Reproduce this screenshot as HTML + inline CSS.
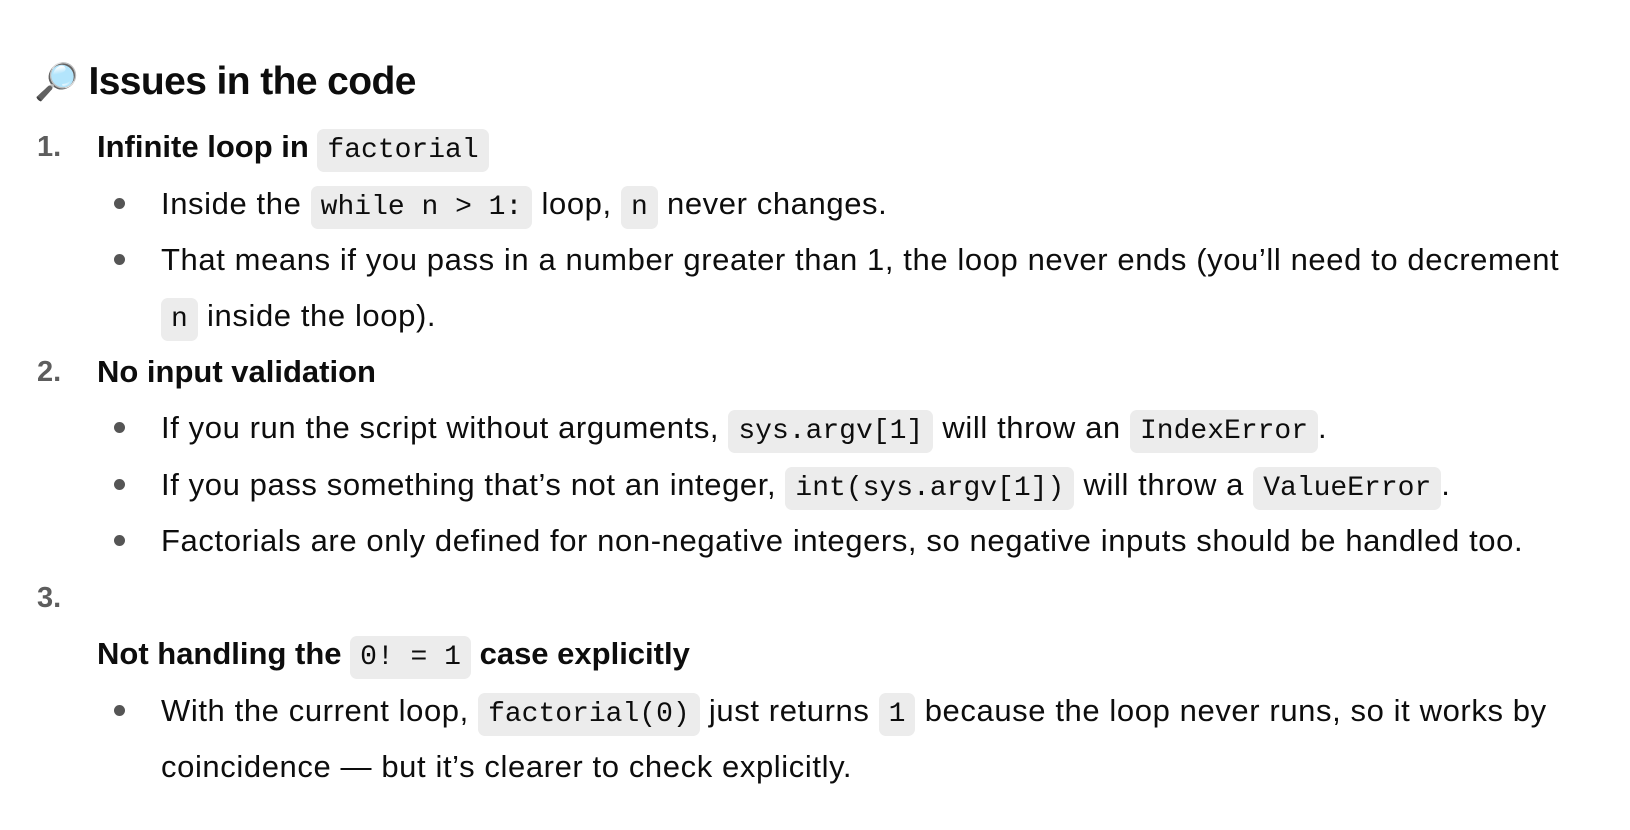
<!DOCTYPE html>
<html><head><meta charset="utf-8"><style>
body{margin:0;background:#fff;width:1630px;height:830px;overflow:hidden;font-family:"Liberation Sans",sans-serif;color:#0d0d0d}
.l{position:absolute;white-space:nowrap;font-size:31px;letter-spacing:0.6px;line-height:44px;height:44px}
.h{position:absolute;left:34px;top:56px;font-size:39px;font-weight:bold;line-height:52px;letter-spacing:-0.6px}
.n{position:absolute;left:37px;font-weight:bold;color:#5d5d5d;font-size:29px;line-height:44px}
.b{font-weight:bold;letter-spacing:0}
.dot{position:absolute;left:114px;width:11px;height:11px;border-radius:50%;background:#555}
code{font-family:"Liberation Mono",monospace;font-size:28px;letter-spacing:0;background:#ececec;border-radius:7px;padding:6px 10px}
</style></head><body>
<div class="h"><span style="font-size:36px">🔎</span> Issues in the code</div>

<div class="n" style="top:125px">1.</div>
<div class="l b" style="left:97px;top:125px">Infinite loop in <code style="font-weight:normal">factorial</code></div>

<div class="dot" style="top:198px"></div>
<div class="l" style="left:161px;top:182px">Inside the <code>while n &gt; 1:</code> loop, <code>n</code> never changes.</div>
<div class="dot" style="top:254px"></div>
<div class="l" style="left:161px;top:238px">That means if you pass in a number greater than 1, the loop never ends (you’ll need to decrement</div>
<div class="l" style="left:161px;top:294px"><code>n</code> inside the loop).</div>

<div class="n" style="top:350px">2.</div>
<div class="l b" style="left:97px;top:350px">No input validation</div>
<div class="dot" style="top:422px"></div>
<div class="l" style="left:161px;top:406px">If you run the script without arguments, <code>sys.argv[1]</code> will throw an <code>IndexError</code>.</div>
<div class="dot" style="top:479px"></div>
<div class="l" style="left:161px;top:463px">If you pass something that’s not an integer, <code>int(sys.argv[1])</code> will throw a <code>ValueError</code>.</div>
<div class="dot" style="top:535px"></div>
<div class="l" style="left:161px;top:519px">Factorials are only defined for non-negative integers, so negative inputs should be handled too.</div>

<div class="n" style="top:576px">3.</div>
<div class="l b" style="left:97px;top:632px">Not handling the <code style="font-weight:normal">0! = 1</code> case explicitly</div>
<div class="dot" style="top:705px"></div>
<div class="l" style="left:161px;top:689px">With the current loop, <code>factorial(0)</code> just returns <code>1</code> because the loop never runs, so it works by</div>
<div class="l" style="left:161px;top:745px">coincidence — but it’s clearer to check explicitly.</div>
</body></html>
